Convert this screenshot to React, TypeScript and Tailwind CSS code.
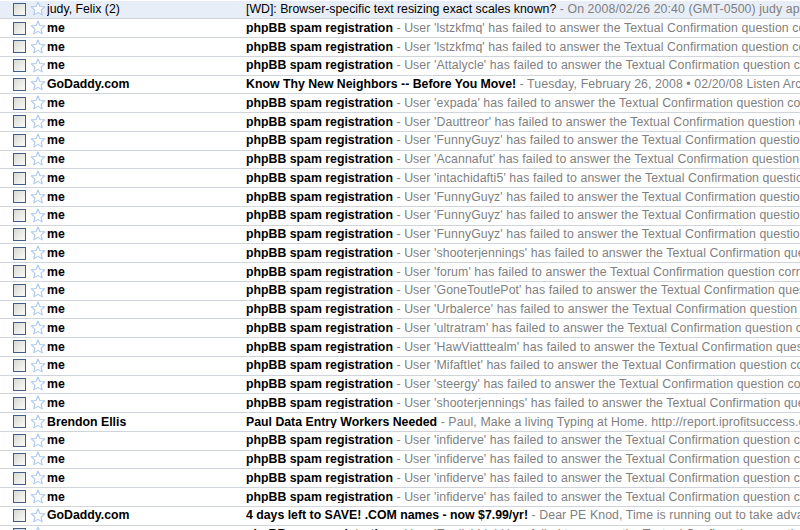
import React from 'react';

type Mail = {
  from: string;
  subject: string;
  snippet: string;
  read?: boolean;
};

const spam = (user: string): Mail => ({
  from: 'me',
  subject: 'phpBB spam registration',
  snippet: `User '${user}' has failed to answer the Textual Confirmation question correctly during registration.`,
});

const mails: Mail[] = [
  {
    from: 'judy, Felix (2)',
    subject: '[WD]: Browser-specific text resizing exact scales known?',
    snippet: 'On 2008/02/26 20:40 (GMT-0500) judy apparently typed: Is there a list somewhere',
    read: true,
  },
  spam('lstzkfmq'),
  spam('lstzkfmq'),
  spam('Attalycle'),
  {
    from: 'GoDaddy.com',
    subject: 'Know Thy New Neighbors -- Before You Move!',
    snippet: 'Tuesday, February 26, 2008 • 02/20/08 Listen Archives Sign up for',
  },
  spam('expada'),
  spam('Dauttreor'),
  spam('FunnyGuyz'),
  spam('Acannafut'),
  spam('intachidafti5'),
  spam('FunnyGuyz'),
  spam('FunnyGuyz'),
  spam('FunnyGuyz'),
  spam('shooterjennings'),
  spam('forum'),
  spam('GoneToutlePot'),
  spam('Urbalerce'),
  spam('ultratram'),
  spam('HawViatttealm'),
  spam('Mifaftlet'),
  spam('steergy'),
  spam('shooterjennings'),
  {
    from: 'Brendon Ellis',
    subject: 'Paul Data Entry Workers Needed',
    snippet: 'Paul, Make a living Typing at Home. http://report.iprofitsuccess.com/',
  },
  spam('infiderve'),
  spam('infiderve'),
  spam('infiderve'),
  spam('infiderve'),
  {
    from: 'GoDaddy.com',
    subject: '4 days left to SAVE! .COM names - now $7.99/yr!',
    snippet: 'Dear PE Knod, Time is running out to take advantage of this offer',
  },
  spam('Englishblah'),
];

const Checkbox = () => (
  <svg width="13" height="13" viewBox="0 0 13 13" className="shrink-0">
    <defs>
      <linearGradient id="cb" x1="0" y1="0" x2="1" y2="1">
        <stop offset="0" stopColor="#d8d8d2" />
        <stop offset="1" stopColor="#fbfbfa" />
      </linearGradient>
    </defs>
    <rect x="0.5" y="0.5" width="12" height="12" fill="url(#cb)" stroke="#3f5f86" />
  </svg>
);

const Star = () => (
  <svg width="16" height="16" viewBox="0 0 16 16" className="shrink-0">
    <path
      d="M8 1 L9.9 5.5 L14.8 5.9 L11.1 9.1 L12.2 13.9 L8 11.4 L3.8 13.9 L4.9 9.1 L1.2 5.9 L6.1 5.5 Z"
      fill="#ffffff"
      stroke="#acc8ee"
      strokeWidth="1.1"
      strokeLinejoin="round"
    />
  </svg>
);

export default function App() {
  return (
    <div
      className="w-[800px] h-[530px] overflow-hidden bg-white text-black"
      style={{ fontFamily: '"Liberation Sans", Arial, sans-serif' }}
    >
      <div className="pt-[0.5px]">
        {mails.map((m, i) => (
          <div
            key={i}
            className={`flex items-center h-[18.75px] border-b border-[#d0d5dc] text-[12.3px] leading-none whitespace-nowrap overflow-hidden ${
              m.read ? 'bg-[#e8eef7]' : 'bg-white'
            }`}
          >
            <div className="w-[13px] ml-[13px] flex items-center">
              <Checkbox />
            </div>
            <div className="w-[17px] ml-[4px] flex items-center">
              <Star />
            </div>
            <div className={`w-[199px] overflow-hidden ${m.read ? '' : 'font-bold'}`}>{m.from}</div>
            <div className="flex-1 overflow-hidden">
              <span className={m.read ? '' : 'font-bold'}>{m.subject}</span>
              <span className="text-[#7f7f7f] tracking-[0.1px]"> - {m.snippet}</span>
            </div>
          </div>
        ))}
      </div>
    </div>
  );
}
